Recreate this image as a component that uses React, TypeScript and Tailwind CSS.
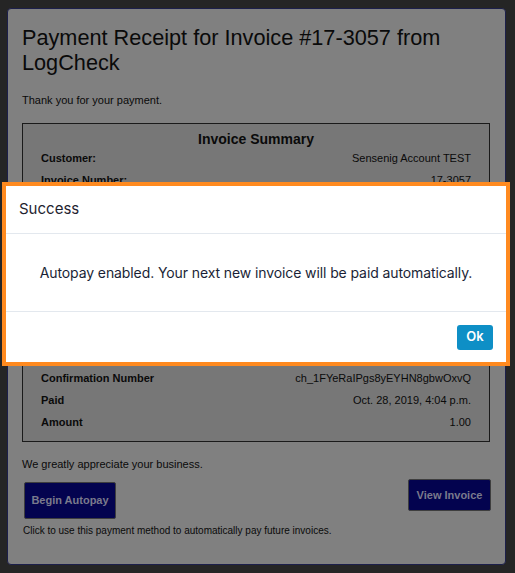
const rows = [
  { label: "Customer:", value: "Sensenig Account TEST" },
  { label: "Invoice Number:", value: "17-3057" },
  { label: "Invoice Date:", value: "Oct. 28, 2019" },
  { label: "Due Date:", value: "Nov. 27, 2019" },
  { label: "Terms:", value: "Net 30" },
  { label: "Subtotal:", value: "1.00" },
  { label: "Tax:", value: "0.00" },
  { label: "Invoice Total:", value: "1.00" },
  { label: "Amount Due:", value: "0.00" },
  { label: "Payment Method:", value: "Visa ending in 4242" },
  { label: "Confirmation Number", value: "ch_1FYeRaIPgs8yEYHN8gbwOxvQ" },
  { label: "Paid", value: "Oct. 28, 2019, 4:04 p.m." },
  { label: "Amount", value: "1.00" },
];

export default function App() {
  return (
    <div className="relative h-[573px] w-[515px] overflow-hidden bg-[#252525] pt-[8px] pl-[7px] font-['Liberation_Sans',Arial,sans-serif]">
      {/* Receipt card (dimmed behind the dialog) */}
      <div className="h-[557px] w-[499px] rounded-[4px] border border-[#1c1f4a] bg-[#808080] px-[14px] pt-[16px] text-[#0a0a0a]">
        <h1 className="text-[21.7px] leading-[25px]">
          Payment Receipt for Invoice #17-3057 from LogCheck
        </h1>
        <p className="mt-[18px] text-[11px] leading-[14px]">Thank you for your payment.</p>

        <div className="mt-[16px] w-[468px] border border-[#1a1a1a] bg-[#777777] px-[18px] pt-[7px] pb-[8px]">
          <h2 className="text-center text-[14px] font-bold leading-[16px]">Invoice Summary</h2>
          <div>
            {rows.map((r) => (
              <div key={r.label} className="flex h-[22px] items-center justify-between text-[11px]">
                <span className="font-bold">{r.label}</span>
                <span>{r.value}</span>
              </div>
            ))}
          </div>
        </div>

        <p className="mt-[15px] text-[11px] leading-[14px]">We greatly appreciate your business.</p>

        <div className="mt-[8px] flex items-start justify-between">
          <div>
            <button className="ml-[2px] mt-[3px] h-[37px] w-[92px] rounded-[2px] border border-[#3e3e3e] bg-[#03034f] text-[11px] font-bold text-[#7a7a8c]">
              Begin Autopay
            </button>
            <p className="mt-[5px] ml-[1px] text-[10px] leading-[13px]">
              Click to use this payment method to automatically pay future invoices.
            </p>
          </div>
          <button className="h-[32px] w-[83px] rounded-[2px] border border-[#3e3e3e] bg-[#03034f] text-[11px] font-bold text-[#7a7a8c]">
            View Invoice
          </button>
        </div>
      </div>

      {/* Success dialog */}
      <div className="absolute top-[182px] left-[2px] w-[508px] border-[4px] border-[#ff8a1f] bg-white font-['Inter',sans-serif]">
        <div className="flex h-[48px] items-center border-b border-[#e3e8ee] px-[13px] text-[15px] text-[#1f2430]">
          Success
        </div>
        <div className="flex h-[78px] items-center justify-center border-b border-[#e3e8ee] text-[14px] tracking-[-0.1px] text-[#1a1f36]">
          Autopay enabled. Your next new invoice will be paid automatically.
        </div>
        <div className="flex h-[50px] items-center justify-end pr-[13px]">
          <button className="h-[25px] w-[36px] rounded-[3px] bg-[#0e8fc6] text-[13px] font-semibold text-white">
            Ok
          </button>
        </div>
      </div>
    </div>
  );
}
